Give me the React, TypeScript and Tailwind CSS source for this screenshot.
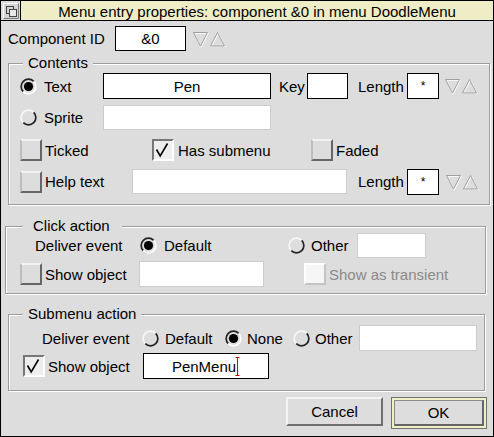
import React from 'react';

function Radio({ on }: { on?: boolean }) {
  return (
    <svg width="17" height="17" viewBox="0 0 17 17" className="shrink-0">
      <circle cx="8.5" cy="8.5" r="7.3" fill="#dddddd" />
      <path d="M3.3 13.7 A7.3 7.3 0 0 1 13.7 3.3" fill="none" stroke={on ? '#222222' : '#f6f6f6'} strokeWidth="1.7" />
      <path d="M13.7 3.3 A7.3 7.3 0 0 1 3.3 13.7" fill="none" stroke={on ? '#ffffff' : '#222222'} strokeWidth="1.7" />
      {on && <circle cx="8.5" cy="8.5" r="4.6" fill="#000000" />}
    </svg>
  );
}

function Check({ on, faded }: { on?: boolean; faded?: boolean }) {
  if (faded) {
    return <div className="w-[22px] h-[22px] shrink-0 bg-[#f6f6f6] border-2 border-t-white border-l-white border-r-[#c4c4c4] border-b-[#c4c4c4]" />;
  }
  if (on) {
    return (
      <div className="w-[22px] h-[22px] shrink-0 bg-[#eeeeee] border-2 border-t-[#777777] border-l-[#777777] border-r-white border-b-white">
        <svg width="18" height="18" viewBox="0 0 18 18">
          <path d="M2.5 8.5 L6.2 15 L13.5 2.5" fill="none" stroke="#000000" strokeWidth="1.6" />
        </svg>
      </div>
    );
  }
  return <div className="w-[22px] h-[22px] shrink-0 bg-[#dddddd] border-2 border-t-[#f2f2f2] border-l-[#bdbdbd] border-r-[#666666] border-b-[#666666]" />;
}

function Arrows({ className = '' }: { className?: string }) {
  return (
    <svg width="34" height="16" viewBox="0 0 34 16" className={`shrink-0 ${className}`}>
      <polygon points="1.5,1.5 15.5,1.5 8.5,15" fill="none" stroke="#ffffff" strokeWidth="1" transform="translate(0.8,0.8)" />
      <polygon points="1.5,1.5 15.5,1.5 8.5,15" fill="none" stroke="#a0a0a0" strokeWidth="1" />
      <polygon points="18.5,15 32.5,15 25.5,1.5" fill="none" stroke="#ffffff" strokeWidth="1" transform="translate(0.8,0.8)" />
      <polygon points="18.5,15 32.5,15 25.5,1.5" fill="none" stroke="#a0a0a0" strokeWidth="1" />
    </svg>
  );
}

function Frame({ label, labelClass, className, children }: { label: string; labelClass: string; className: string; children: React.ReactNode }) {
  return (
    <div className={`relative shrink-0 border border-[#9c9c9c] shadow-[inset_1px_1px_0_#ffffff,1px_1px_0_#ffffff] ${className}`}>
      <span className={`absolute -top-[10px] bg-[#dddddd] leading-[17px] ${labelClass}`}>{label}</span>
      {children}
    </div>
  );
}

export default function App() {
  return (
    <div className="w-[494px] h-[437px] bg-[#dddddd] border border-black flex flex-col text-[15px] text-black leading-none font-['Liberation_Sans',Arial,sans-serif]">
      {/* Title bar */}
      <div className="h-[20px] shrink-0 flex border-b border-black">
        <div className="w-[20px] border-r border-black flex items-center justify-center">
          <svg width="16" height="16" viewBox="0 0 16 16">
            <rect x="0.5" y="0.5" width="15" height="15" fill="#d4d4d4" stroke="#ffffff" />
            <path d="M15.5 0.5 V15.5 H0.5" fill="none" stroke="#7a7a7a" />
            <rect x="3.5" y="3.5" width="7" height="7" fill="none" stroke="#444444" />
            <rect x="6.5" y="6.5" width="7" height="7" fill="#e8e8e8" stroke="#444444" />
          </svg>
        </div>
        <div className="flex-1 bg-[#efedc6] flex items-center justify-center pt-[1px]">
          Menu entry properties: component &amp;0 in menu DoodleMenu
        </div>
      </div>

      {/* Component ID */}
      <div className="mt-[5px] h-[25px] flex items-center">
        <span className="pl-[7px] w-[114px]">Component ID</span>
        <div className="w-[71px] h-[25px] bg-white border border-black flex items-center justify-center">&amp;0</div>
        <Arrows className="ml-[6px]" />
      </div>

      {/* Contents */}
      <Frame label="Contents" labelClass="left-[14px] px-[5px]" className="mt-[12px] ml-[7px] w-[482px] pt-[9px] pb-[10px] pl-[11px]">
        <div className="h-[26px] flex items-center">
          <div className="w-[83px] flex items-center gap-[7px]"><Radio on />Text</div>
          <div className="w-[168px] h-[26px] bg-white border border-black flex items-center justify-center">Pen</div>
          <span className="ml-[8px] w-[28px]">Key</span>
          <div className="w-[41px] h-[26px] bg-white border border-black" />
          <span className="ml-[10px] w-[49px]">Length</span>
          <div className="w-[32px] h-[26px] bg-white border border-black flex items-start justify-center pt-[6px] text-[12px]">*</div>
          <Arrows className="ml-[5px]" />
        </div>
        <div className="mt-[6px] h-[25px] flex items-center">
          <div className="w-[83px] flex items-center gap-[7px]"><Radio />Sprite</div>
          <div className="w-[168px] h-[25px] bg-white border border-[#cccccc]" />
        </div>
        <div className="mt-[9px] h-[22px] flex items-center">
          <div className="w-[132px] flex items-center gap-[3px]"><Check />Ticked</div>
          <div className="w-[159px] flex items-center gap-[4px]"><Check on />Has submenu</div>
          <div className="flex items-center gap-[3px]"><Check />Faded</div>
        </div>
        <div className="mt-[8px] h-[25px] flex items-center">
          <div className="w-[112px] flex items-center gap-[3px]"><Check />Help text</div>
          <div className="w-[215px] h-[25px] bg-white border border-[#cccccc]" />
          <span className="ml-[11px] w-[49px]">Length</span>
          <div className="w-[32px] h-[26px] bg-white border border-black flex items-start justify-center pt-[6px] text-[12px]">*</div>
          <Arrows className="ml-[6px]" />
        </div>
      </Frame>

      {/* Click action */}
      <Frame label="Click action" labelClass="left-[17px] pl-[10px] pr-[12px]" className="mt-[21px] ml-[4px] w-[481px] pt-[6px] pb-[6px] pl-[14px]">
        <div className="ml-[15px] h-[25px] flex items-center">
          <span className="w-[105px]">Deliver event</span>
          <div className="w-[148px] flex items-center gap-[7px]"><Radio on />Default</div>
          <div className="w-[69px] flex items-center gap-[6px]"><Radio />Other</div>
          <div className="w-[69px] h-[25px] bg-white border border-[#cccccc]" />
        </div>
        <div className="mt-[3px] h-[26px] flex items-center">
          <div className="w-[119px] flex items-center gap-[3px]"><Check />Show object</div>
          <div className="w-[125px] h-[26px] bg-white border border-[#cccccc]" />
          <div className="ml-[40px] flex items-center gap-[3px] text-[#8a8a8a]"><Check faded />Show as transient</div>
        </div>
      </Frame>

      {/* Submenu action */}
      <Frame label="Submenu action" labelClass="left-[14px] px-[5px]" className="mt-[20px] ml-[7px] w-[477px] pt-[10px] pb-[11px] pl-[14px]">
        <div className="ml-[19px] h-[26px] flex items-center">
          <span className="w-[100px]">Deliver event</span>
          <div className="w-[83px] flex items-center gap-[6px]"><Radio />Default</div>
          <div className="w-[68px] flex items-center gap-[5px]"><Radio on />None</div>
          <div className="w-[66px] flex items-center gap-[5px]"><Radio />Other</div>
          <div className="w-[118px] h-[26px] bg-white border border-[#cccccc]" />
        </div>
        <div className="mt-[2px] h-[26px] flex items-center">
          <div className="w-[120px] flex items-center gap-[3px]"><Check on />Show object</div>
          <div className="w-[126px] h-[26px] bg-white border border-black flex items-center justify-center">
            <span>PenMenu</span>
            <svg width="5" height="19" viewBox="0 0 5 19" className="-ml-[1px]">
              <path d="M0.5 0.5 H4.5 M2.5 0.5 V18.5 M0.5 18.5 H4.5" fill="none" stroke="#d40000" strokeWidth="1" />
            </svg>
          </div>
        </div>
      </Frame>

      {/* Buttons */}
      <div className="mt-[6px] pr-[6px] flex justify-end items-start gap-[8px]">
        <button className="w-[97px] h-[29px] bg-[#dddddd] border-2 border-t-[#f4f4f4] border-l-[#f4f4f4] border-r-[#6e6e6e] border-b-[#6e6e6e] flex items-center justify-center">
          Cancel
        </button>
        <div className="w-[96px] h-[32px] border border-[#707070] bg-[#f1efc8] p-[2px]">
          <button className="w-full h-full bg-[#dddddd] border border-t-[#8a8a8a] border-l-[#8a8a8a] border-r-2 border-b-2 border-r-[#666666] border-b-[#666666] flex items-center justify-center">
            OK
          </button>
        </div>
      </div>
    </div>
  );
}
